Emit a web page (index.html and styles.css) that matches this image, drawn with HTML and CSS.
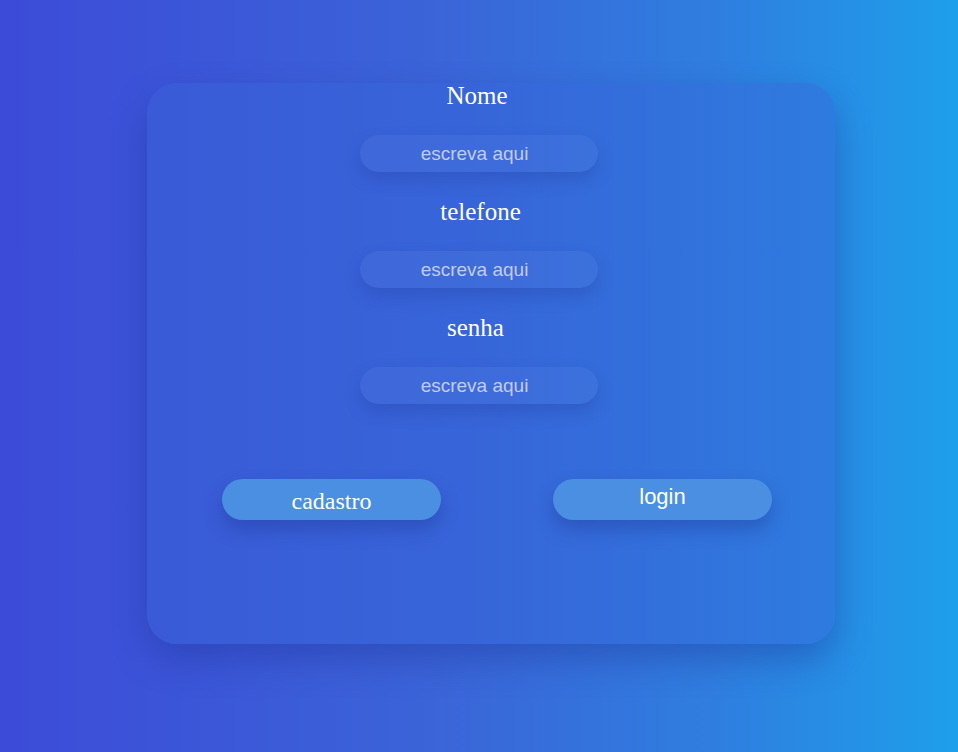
FILE: index.html
```html
<!DOCTYPE html>
<html lang="pt">
<head>
<meta charset="utf-8">
<title>Cadastro</title>
<link rel="stylesheet" href="styles.css">
</head>
<body>
<div class="card">
  <form class="form">
    <label class="label label-nome" for="nome">Nome</label>
    <input class="field" id="nome" type="text" placeholder="escreva aqui">
    <label class="label label-tel" for="tel">telefone</label>
    <input class="field" id="tel" type="text" placeholder="escreva aqui">
    <label class="label label-senha" for="senha">senha</label>
    <input class="field" id="senha" type="password" placeholder="escreva aqui">
    <div class="actions">
      <button type="button" class="btn btn-cad">cadastro</button>
      <button type="button" class="btn btn-login">login</button>
    </div>
  </form>
</div>
</body>
</html>
```
FILE: styles.css
```css
html, body {
  margin: 0;
  height: 100%;
}
body {
  background: linear-gradient(90deg, #3c4bd8 0%, #3b64d8 45%, #2f7edf 75%, #1e9feb 100%);
  font-family: "Liberation Serif", "Times New Roman", serif;
  overflow: hidden;
}
.card {
  margin: 83px 0 0 147px;
  width: 688px;
  height: 561px;
  box-sizing: border-box;
  border-radius: 30px;
  background: linear-gradient(90deg, #3a5ad7 0%, #3766d9 50%, #2e7bdf 100%);
  box-shadow: 0 16px 34px rgba(30, 50, 150, 0.4);
  padding-right: 24px;
}
.form {
  display: flex;
  flex-direction: column;
  align-items: center;
}
.label {
  color: #ffffff;
  font-size: 25px;
  line-height: 28px;
}
.label-nome {
  margin-top: -1px;
  margin-right: 4px;
}
.label-tel {
  margin-left: 3px;
}
.label-senha {
  margin-right: 7px;
}
.field {
  width: 238px;
  height: 37px;
  box-sizing: border-box;
  border: none;
  outline: none;
  border-radius: 20px;
  background: rgba(255, 255, 255, 0.04);
  box-shadow: 0 8px 16px rgba(30, 50, 140, 0.25);
  font-family: "Liberation Sans", Arial, sans-serif;
  font-size: 19px;
  text-align: center;
  color: #ffffff;
  padding: 0 9px 0 0;
  margin: 25px 0 26px;
}
.field::placeholder {
  color: #c3cbea;
}
.actions {
  display: flex;
  gap: 112px;
  margin-top: 49px;
  padding-left: 36px;
}
.btn {
  width: 219px;
  height: 41px;
  border: none;
  border-radius: 21px;
  background: #4a8fe2;
  color: #ffffff;
  box-shadow: 0 10px 18px rgba(30, 50, 140, 0.35);
  cursor: pointer;
}
.btn-cad {
  font-family: "Liberation Serif", "Times New Roman", serif;
  font-size: 24px;
  padding-top: 4px;
}
.btn-login {
  font-family: "Liberation Sans", Arial, sans-serif;
  font-size: 22px;
  padding-bottom: 7px;
}
```
